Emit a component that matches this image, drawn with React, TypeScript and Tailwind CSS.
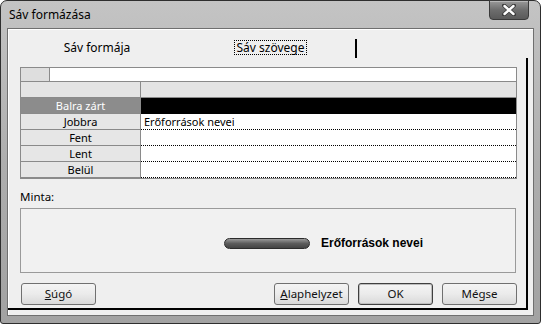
import React from "react";

const ui = { fontFamily: '"Noto Sans", "Open Sans", sans-serif' };

const rows = [
  { label: "Balra zárt", value: "", selected: true },
  { label: "Jobbra", value: "Erőforrások nevei" },
  { label: "Fent", value: "" },
  { label: "Lent", value: "" },
  { label: "Belül", value: "" },
];

function Btn({ children, wide, primary }: { children: React.ReactNode; wide?: boolean; primary?: boolean }) {
  return (
    <div
      className={
        "flex h-[22px] w-[75px] items-center justify-center rounded-[3px] border bg-gradient-to-b from-[#f4f4f4] via-[#ebebeb] to-[#d9d9d9] text-[11.5px] text-[#111] " +
        (primary ? "border-[#3f3f3f] shadow-[inset_0_0_0_1px_#bdbdbd]" : "border-[#707070]") +
        (wide ? "" : "")
      }
    >
      {children}
    </div>
  );
}

function CloseButton() {
  return (
    <div className="-mt-px mr-[5px] ml-auto flex h-[20px] w-[40px] items-center justify-center rounded-b-[4px] border border-[#3a3a3a] bg-gradient-to-b from-[#9a9a9a] via-[#6d6d6d] to-[#5a5a5a] shadow-[inset_0_1px_0_#b8b8b8]">
      <svg width="14" height="12" viewBox="0 0 14 12">
        <path d="M2 1.5 L12 10.5 M12 1.5 L2 10.5" stroke="#3a3a3a" strokeWidth="4" strokeLinecap="round" />
        <path d="M2.5 2 L11.5 10 M11.5 2 L2.5 10" stroke="#ffffff" strokeWidth="2.4" strokeLinecap="round" />
      </svg>
    </div>
  );
}

export default function App() {
  return (
    <div className="h-[324px] w-[541px] overflow-hidden bg-white" style={ui}>
      <div className="flex h-full w-full flex-col rounded-t-[7px] rounded-b-[3px] border border-[#2e2e2e] bg-gradient-to-b from-[#c4c4c4] via-[#aeaeae] to-[#a2a2a2] px-[6px] pb-[7px]">
        {/* title bar */}
        <div className="flex h-[27px] shrink-0 items-start">
          <span className="self-center pl-[2px] text-[12px] text-black">Sáv formázása</span>
          <CloseButton />
        </div>

        {/* client area */}
        <div className="flex-1 border border-[#6f6f6f] bg-[#efefef] shadow-[inset_1px_1px_0_#ffffff]">
          <div className="flex h-[281px] w-[520px] flex-col">
            {/* tabs */}
            <div className="flex h-[29px] shrink-0 text-[12px] text-black">
              <div className="flex w-[178px] items-center justify-center pt-[8px]">Sáv formája</div>
              <div className="flex w-[169px] items-center justify-center pt-[8px]">
                <span className="border border-dotted border-black px-[2px] leading-[13px]">Sáv szövege</span>
              </div>
              <div className="mt-[10px] h-[19px] w-[2px] bg-black" />
            </div>

            {/* page */}
            <div className="flex flex-1 flex-col border-r-2 border-b-2 border-black pt-[9px] pl-[12px]">
              <div className="flex w-[497px] flex-col border border-[#8a8a8a] text-[11px]">
                <div className="flex h-[14px] border-b border-[#8a8a8a]">
                  <div className="w-[29px] border-r border-[#8a8a8a] bg-[#dedede]" />
                  <div className="flex-1 bg-white" />
                </div>
                <div className="flex h-[16px] border-b border-[#8a8a8a] bg-[#e4e4e4]">
                  <div className="w-[120px] border-r border-[#8a8a8a]" />
                  <div className="flex-1" />
                </div>
                {rows.map((r) => (
                  <div key={r.label} className="flex h-[16px]">
                    <div
                      className={
                        "flex w-[120px] items-center justify-center border-r border-b border-[#8a8a8a] leading-none " +
                        (r.selected ? "bg-[#8c8c8c] text-white" : "bg-[#e6e6e6] text-black")
                      }
                    >
                      {r.label}
                    </div>
                    <div
                      className={
                        "flex flex-1 items-center pl-[3px] leading-none " +
                        (r.selected ? "bg-black" : "border-b border-dotted border-black bg-white text-black")
                      }
                    >
                      {r.value}
                    </div>
                  </div>
                ))}
              </div>

              <div className="mt-[10px] h-[16px] text-[11.5px] leading-[16px] text-black">Minta:</div>

              <div className="mt-[3px] flex h-[65px] w-[496px] items-center border border-[#9a9a9a] bg-[#f1f1f1] pt-[5px] pl-[203px]">
                <div className="h-[11px] w-[86px] rounded-full border border-[#2c2c2c] bg-gradient-to-b from-[#9a9a9a] via-[#5c5c5c] to-[#444444]" />
                <span
                  className="ml-[11px] text-[12px] font-bold text-black"
                  style={{ fontFamily: '"Liberation Sans", Arial, sans-serif' }}
                >
                  Erőforrások nevei
                </span>
              </div>

              <div className="mt-[10px] flex w-[497px] items-center gap-[9px] pl-[1px]">
                <Btn>
                  <span className="underline">S</span>úgó
                </Btn>
                <div className="flex-1" />
                <Btn>
                  <span className="underline">A</span>laphelyzet
                </Btn>
                <Btn primary>OK</Btn>
                <Btn>Mégse</Btn>
              </div>
            </div>
          </div>
        </div>
      </div>
    </div>
  );
}
